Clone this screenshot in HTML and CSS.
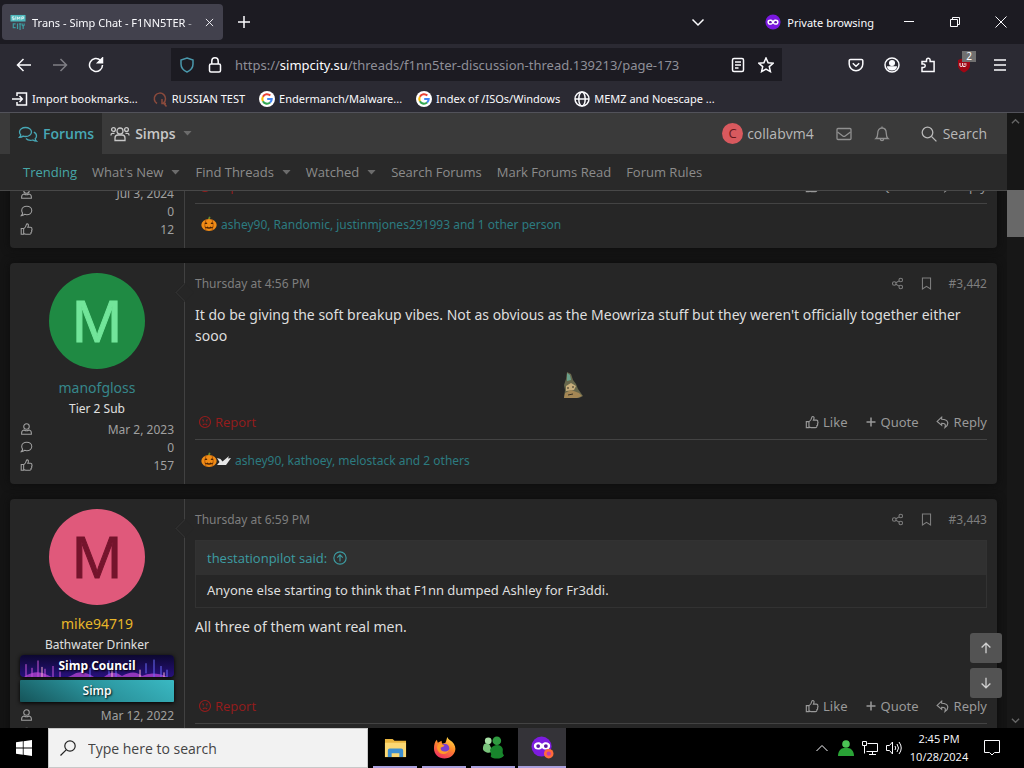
FILE: index.html
```html
<!DOCTYPE html>
<html lang="en">
<head>
    <meta charset="UTF-8">
    <meta name="viewport" content="width=device-width, initial-scale=1.0">
    <title>Trans - Simp Chat - F1NN5TER</title>
    <link rel="stylesheet" href="styles.css">
</head>
<body>
    <!-- Shared icons -->
    <svg class="sprite" aria-hidden="true">
        <symbol id="i-user" viewBox="0 0 16 16"><circle cx="8" cy="5" r="3.4"/><path d="M4.8 9.2C3 9.6 2 11 2 13v1.4h12V13c0-2-1-3.400-2.800-3.800-2 1.200-4.400 1.200-6.400 0z"/></symbol>
        <symbol id="i-comment" viewBox="0 0 16 16"><path d="M8.300 2.200c3.500 0 6.200 2.300 6.200 5.200s-2.700 5.200-6.200 5.200c-1 0-1.900-.2-2.700-.5-1 .8-2.300 1.500-4 1.600.9-1 1.500-2 1.600-3.100C2.500 9.700 2.100 8.600 2.100 7.400c0-2.900 2.700-5.200 6.200-5.200z"/></symbol>
        <symbol id="i-thumb" viewBox="0 0 16 16"><path d="M1.500 7.500h3v7h-3zM4.500 13.600l2.500.9h4.800c1.600 0 2-1.200 1.700-2.100.9-.5 1.100-1.500.7-2.300.7-.6.700-1.600.3-2.200.4-1-.3-2-1.500-2H9.600c.5-1 .9-2 .7-3.200-.2-1.200-2.200-1.500-2.500-.1-.4 2.400-1.500 4-3.300 5.100z"/></symbol>
        <symbol id="i-share" viewBox="0 0 16 16"><circle cx="4" cy="8" r="2.200"/><circle cx="12" cy="3.700" r="2.200"/><circle cx="12" cy="12.300" r="2.200"/><path d="M6 7l4-2.200M6 9l4 2.200"/></symbol>
        <symbol id="i-mark" viewBox="0 0 16 16"><path d="M3 1.200h10v13.600L8 11.600l-5 3.200z"/></symbol>
        <symbol id="i-plus" viewBox="0 0 16 16"><path d="M8 2v12M2 8h12"/></symbol>
        <symbol id="i-reply" viewBox="0 0 16 16"><path d="M6.500 2.500L1.300 7.300l5.200 4.500V9.400c3.600 0 5 1.300 3.700 5 4.800-3.200 4.800-9.300-3.700-9.500z"/></symbol>
        <symbol id="i-angry" viewBox="0 0 16 16"><circle cx="8" cy="8" r="6.300"/><path d="M4.800 5.300l2 1M11.200 5.300l-2 1M5.500 11.500c1.400-1.700 3.600-1.700 5 0M6 7.500v.8M10 7.500v.8"/></symbol>
        <symbol id="i-caret" viewBox="0 0 10 6"><path d="M0 0h10L5 5.500z"/></symbol>
        <symbol id="i-google" viewBox="0 0 16 16"><circle cx="8" cy="8" r="8" fill="#fff"/><g fill="none" stroke-width="2.100"><path d="M11.300 4.600A4.700 4.700 0 0 0 3.900 5.700" stroke="#ea4335"/><path d="M3.900 5.700a4.700 4.700 0 0 0 0 4.600" stroke="#fbbc05"/><path d="M3.900 10.300a4.700 4.700 0 0 0 7.200 1.200" stroke="#34a853"/><path d="M11.100 11.500A4.700 4.700 0 0 0 12.700 8H8.200" stroke="#4285f4"/></g></symbol>
        <symbol id="i-pumpkin" viewBox="0 0 16 16"><path d="M7 3l1-2.500 1.500.5L9 3z" fill="#6a8a2c"/><ellipse cx="8" cy="9" rx="7.700" ry="6" fill="#f08c16"/><path d="M5 3.500Q2.500 9 5 14.500M11 3.500q2.500 5.500 0 11" stroke="#b85a08" fill="none"/><path d="M3.500 8L5 6l1.500 2zM9.500 8L11 6l1.500 2zM3.500 10.500l2 .7.700-.7 1.800 1 1.800-1 .7.700 2-.7c-1 3-8 3-9 0z" fill="#4a2204"/></symbol>
        <symbol id="i-mask" viewBox="0 0 20 20"><circle cx="10" cy="10" r="9.500" fill="#7a18e0"/><path d="M10 8.300C8.800 6.600 3 5.800 3 10c0 4.400 5.300 4.300 7 1.900 1.700 2.400 7 2.500 7-1.900 0-4.200-5.800-3.400-7-1.700z" fill="#fff"/><ellipse cx="6.700" cy="10.200" rx="1.700" ry="1.500" fill="#5c10b0"/><ellipse cx="13.300" cy="10.200" rx="1.700" ry="1.500" fill="#5c10b0"/></symbol>
    </svg>

    <div class="titlebar">
        <div class="tab">
            <svg class="favicon" viewBox="0 0 16 17"><path d="M0 1h16v7H0z" fill="#4fb9bd"/><path d="M4 3H2v1.500h2V6H2M5.700 2.500V6M7.500 6V3l1.200 2L10 3v3M12 6V3h2v1.700h-2" fill="none" stroke="#e8f6f6" stroke-width=".9"/><path d="M5.500 10.500H3v4h2.500M7.500 10v6M9 10.500h2.500M10.200 10.500V17M12.500 10v2l1 1 1-1v-2M13.500 13v3" fill="none" stroke="#3d9ba0" stroke-width="1.300"/></svg>
            <span class="tab-title">Trans - Simp Chat - F1NN5TER -</span>
            <button class="tab-close" aria-label="Close tab"><svg class="line" viewBox="0 0 10 10"><path d="M1 1l8 8M9 1L1 9"/></svg></button>
        </div>
        <button class="new-tab" aria-label="New tab"><svg class="line" viewBox="0 0 14 14"><path d="M7 1v12M1 7h12"/></svg></button>
        <button class="list-tabs" aria-label="List all tabs"><svg class="line" viewBox="0 0 14 14"><path d="M1.500 4.500L7 10l5.500-5.500"/></svg></button>
        <div class="private"><svg viewBox="0 0 20 20"><use href="#i-mask"/></svg>Private browsing</div>
        <div class="win-buttons">
            <button aria-label="Minimize"><svg class="thin" viewBox="0 0 12 12"><path d="M1 5.500h10"/></svg></button>
            <button aria-label="Restore"><svg class="thin" viewBox="0 0 12 12"><path d="M1.500 3.500h7v7h-7zM3.500 3.500v-2h7v7h-2"/></svg></button>
            <button aria-label="Close"><svg class="thin" viewBox="0 0 12 12"><path d="M.5.5l11 11M11.500.5l-11 11"/></svg></button>
        </div>
    </div>

    <div class="toolbar">
        <div class="nav-buttons">
            <button aria-label="Back"><svg class="line" viewBox="0 0 16 16"><path d="M15 8H1.500M7.500 2l-6 6 6 6"/></svg></button>
            <button class="off" aria-label="Forward"><svg class="line" viewBox="0 0 16 16"><path d="M1 8h13.500M8.500 2l6 6-6 6"/></svg></button>
            <button aria-label="Reload"><svg class="line" viewBox="0 0 16 16"><path d="M14.500 8a6.500 6.500 0 1 1-2-4.700L14 5"/><path d="M14.500 1v4.800H9.700z" fill="currentColor"/></svg></button>
        </div>
        <div class="urlbar">
            <svg class="line shield" viewBox="0 0 16 16"><path d="M8 1l6 2v4c0 4-2.500 6.500-6 8-3.500-1.500-6-4-6-8V3z"/></svg>
            <svg class="line" viewBox="0 0 16 16"><rect x="2.500" y="7" width="11" height="8" rx="1.500"/><path d="M4.800 7V4a3.200 3.200 0 0 1 6.400 0v3"/></svg>
            <div class="url">https://<b>simpcity.su</b>/threads/f1nn5ter-discussion-thread.139213/page-173</div>
            <svg class="line" viewBox="0 0 16 16"><rect x="2.500" y="1.500" width="11" height="13" rx="1.500"/><path d="M5 5h6M5 8h6M5 11h3.500"/></svg>
            <svg class="line" viewBox="0 0 16 16"><path d="M8 1l2.100 4.700 5 .5-3.800 3.400 1.100 5L8 12l-4.400 2.600 1.100-5L.9 6.200l5-.5z"/></svg>
        </div>
        <div class="tool-buttons">
            <button aria-label="Save to Pocket"><svg class="line" viewBox="0 0 16 16"><path d="M2.500 2.500h11a1.300 1.300 0 0 1 1.300 1.300V7a6.800 6.800 0 0 1-13.600 0V3.800a1.300 1.300 0 0 1 1.300-1.300zM4.800 6.300L8 9.300l3.200-3"/></svg></button>
            <button aria-label="Account"><svg class="line" viewBox="0 0 16 16"><circle cx="8" cy="8" r="7"/><circle cx="8" cy="6" r="2.300" fill="currentColor"/><path d="M3.800 10h8.400c-1 3.700-7.400 3.700-8.400 0z" fill="currentColor"/></svg></button>
            <button aria-label="Extensions"><svg class="line" viewBox="0 0 16 16"><path d="M2 14.500v-4h1.500a1.700 1.700 0 0 0 0-3.500H2V4.500h4.500V3a1.800 1.800 0 0 1 3.600 0v1.500h4v10z"/></svg></button>
            <button class="ublock" aria-label="uBlock"><svg viewBox="0 0 16 16"><path d="M8 1l6 2v5c0 4-3 6-6 7.500C5 14 2 12 2 8V3z" fill="#a00614"/><path d="M4 6v2.500q0 1 1.300 1T6.700 8.500V6M6.700 8.500q0 1 1.300 1t2.300-1M8 7h2.500" fill="none" stroke="#fff"/></svg><span class="count">2</span></button>
            <button aria-label="Menu"><svg class="line" viewBox="0 0 16 16"><path d="M2 3h12M2 8h12M2 13h12"/></svg></button>
        </div>
    </div>

    <nav class="bookmarks">
        <a href="#"><svg class="line" viewBox="0 0 16 16"><path d="M5 5V2h9.500v12H5v-3M0 8h10M7.500 5L10.300 8 7.500 11"/></svg>Import bookmarks...</a>
        <a href="#"><svg class="line rus" viewBox="0 0 16 16"><path d="M5 12.500A5.600 5.600 0 1 1 11.500 12l3 3.500M10 8v4.500h4" fill="none"/></svg>RUSSIAN TEST</a>
        <a href="#"><svg viewBox="0 0 16 16"><use href="#i-google"/></svg>Endermanch/Malware...</a>
        <a href="#"><svg viewBox="0 0 16 16"><use href="#i-google"/></svg>Index of /ISOs/Windows</a>
        <a href="#"><svg class="line" viewBox="0 0 16 16"><circle cx="8" cy="8" r="7"/><ellipse cx="8" cy="8" rx="3.200" ry="7"/><path d="M1 8h14"/></svg>MEMZ and Noescape ...</a>
    </nav>

    <div class="viewport">
        <div class="page">
            <nav class="mainnav">
                <a class="nav-item selected" href="#"><svg class="icon" viewBox="0 0 20 16"><path d="M7.500 1.500c3.300 0 6 2 6 4.500s-2.700 4.500-6 4.500c-.9 0-1.700-.1-2.400-.4-1 .7-2.200 1.100-3.600 1.200.8-.8 1.200-1.600 1.300-2.400C1.900 8.100 1.500 7.100 1.500 6c0-2.500 2.700-4.500 6-4.500zM8 12.500c1 1.200 2.700 1.900 4.500 1.900.9 0 1.700-.1 2.400-.4 1 .7 2.200 1.100 3.600 1.200-.8-.8-1.200-1.600-1.300-2.400.9-.8 1.300-1.800 1.300-2.900 0-1.600-1-3-2.700-3.800"/></svg>Forums</a>
                <a class="nav-item" href="#"><svg class="icon" viewBox="0 0 20 16"><circle cx="10" cy="5" r="3"/><circle cx="3.500" cy="3.500" r="1.900"/><circle cx="16.500" cy="3.500" r="1.900"/><path d="M5 14.500V12c0-2 1.300-3 3-3h4c1.700 0 3 1 3 3v2.500zM1 9.500V9c0-1 .6-1.600 1.500-1.600h2M19 9.500V9c0-1-.6-1.600-1.500-1.600h-2"/></svg>Simps<svg class="caret" viewBox="0 0 10 6"><use href="#i-caret"/></svg></a>
                <a class="account" href="#"><span class="mini">C</span>collabvm4</a>
                <a class="bell" href="#" aria-label="Inbox"><svg class="icon" viewBox="0 0 16 16"><rect x="1" y="2.500" width="14" height="11" rx="1"/><path d="M1.500 6l5.300 4c.8.600 1.600.600 2.400 0l5.300-4"/></svg></a>
                <a class="bell" href="#" aria-label="Alerts"><svg class="icon" viewBox="0 0 16 16"><path d="M8 .5V2M2 12.500c1.500-1.200 1.700-2.500 1.700-5C3.700 4 5.500 2 8 2s4.300 2 4.300 5.500c0 2.500.2 3.800 1.700 5zM6.300 13c.2 2.200 3.200 2.200 3.400 0"/></svg></a>
                <a class="search" href="#"><svg class="icon" viewBox="0 0 16 16"><circle cx="6.500" cy="6.500" r="5.300"/><path d="M10.400 10.400l5 5"/></svg>Search</a>
            </nav>
            <nav class="subnav">
                <a class="selected" href="#">Trending</a>
                <a href="#">What's New<svg class="caret" viewBox="0 0 10 6"><use href="#i-caret"/></svg></a>
                <a href="#">Find Threads<svg class="caret" viewBox="0 0 10 6"><use href="#i-caret"/></svg></a>
                <a href="#">Watched<svg class="caret" viewBox="0 0 10 6"><use href="#i-caret"/></svg></a>
                <a href="#">Search Forums</a>
                <a href="#">Mark Forums Read</a>
                <a href="#">Forum Rules</a>
            </nav>

            <main class="thread">
                <article class="post first">
                    <aside class="user">
                        <ul class="stats">
                            <li><svg class="icon" viewBox="0 0 16 16"><use href="#i-user"/></svg>Jul 3, 2024</li>
                            <li><svg class="icon" viewBox="0 0 16 16"><use href="#i-comment"/></svg>0</li>
                            <li><svg class="icon" viewBox="0 0 16 16"><use href="#i-thumb"/></svg>12</li>
                        </ul>
                    </aside>
                    <div class="main">
                        <footer>
                            <div class="actions">
                                <a class="report" href="#"><svg class="icon" viewBox="0 0 16 16"><use href="#i-angry"/></svg>Report</a>
                                <a href="#"><svg class="icon" viewBox="0 0 16 16"><use href="#i-thumb"/></svg>Like</a>
                                <a href="#"><svg class="icon plus" viewBox="0 0 16 16"><use href="#i-plus"/></svg>Quote</a>
                                <a href="#"><svg class="icon" viewBox="0 0 16 16"><use href="#i-reply"/></svg>Reply</a>
                            </div>
                            <div class="reactions"><svg viewBox="0 0 16 16"><use href="#i-pumpkin"/></svg><a href="#">ashey90, Randomic, justinmjones291993 and 1 other person</a></div>
                        </footer>
                    </div>
                </article>

                <article class="post">
                    <aside class="user">
                        <a class="avatar green" href="#">M</a>
                        <a class="name" href="#">manofgloss</a>
                        <div class="rank">Tier 2 Sub</div>
                        <ul class="stats">
                            <li><svg class="icon" viewBox="0 0 16 16"><use href="#i-user"/></svg>Mar 2, 2023</li>
                            <li><svg class="icon" viewBox="0 0 16 16"><use href="#i-comment"/></svg>0</li>
                            <li><svg class="icon" viewBox="0 0 16 16"><use href="#i-thumb"/></svg>157</li>
                        </ul>
                    </aside>
                    <div class="main">
                        <header>
                            <time>Thursday at 4:56 PM</time>
                            <a href="#" aria-label="Share"><svg class="icon" viewBox="0 0 16 16"><use href="#i-share"/></svg></a>
                            <a href="#" aria-label="Bookmark"><svg class="icon" viewBox="0 0 16 16"><use href="#i-mark"/></svg></a>
                            <a href="#">#3,442</a>
                        </header>
                        <div class="message">It do be giving the soft breakup vibes. Not as obvious as the Meowriza stuff but they weren't officially together either sooo</div>
                        <footer>
                            <div class="actions">
                                <a class="report" href="#"><svg class="icon" viewBox="0 0 16 16"><use href="#i-angry"/></svg>Report</a>
                                <a href="#"><svg class="icon" viewBox="0 0 16 16"><use href="#i-thumb"/></svg>Like</a>
                                <a href="#"><svg class="icon plus" viewBox="0 0 16 16"><use href="#i-plus"/></svg>Quote</a>
                                <a href="#"><svg class="icon" viewBox="0 0 16 16"><use href="#i-reply"/></svg>Reply</a>
                            </div>
                            <div class="reactions"><svg viewBox="0 0 16 16"><use href="#i-pumpkin"/></svg><svg class="goose" viewBox="0 0 14 10"><path d="M0 10L2.500 7 0 3l3.500 1 2 2.500L12 1l-1 2.500L14 3l-3.500 5L9 10z" fill="#e6e6e6"/></svg><a href="#">ashey90, kathoey, melostack and 2 others</a></div>
                        </footer>
                    </div>
                </article>

                <article class="post">
                    <aside class="user">
                        <a class="avatar pink" href="#">M</a>
                        <a class="name gold" href="#">mike94719</a>
                        <div class="rank">Bathwater Drinker</div>
                        <div class="banners">
                            <em class="council"><svg viewBox="0 0 154 24" preserveAspectRatio="none"><path d="M6 24V10M12 24V14M18 24V6M25 24v-9M33 24V12M40 24v-6" stroke="#d05ae0"/><path d="M4 24q12-9 24-2t24 0q9-7 22 2zM84 24q9-9 18-1 12-8 20 0 10-6 26 1z" fill="#c048d8" opacity=".7"/><path d="M50 5l2 9M70 24V14M89 6v16M96 24V12M126 20V9M134 24V5M141 24V12M147 24v-8" stroke="#6b6dff"/><path d="M22 24V13M92 24V15M120 24v-8M144 24v-5" stroke="#ffb6d0"/></svg><span>Simp Council</span></em>
                            <em class="simp">Simp</em>
                        </div>
                        <ul class="stats">
                            <li><svg class="icon" viewBox="0 0 16 16"><use href="#i-user"/></svg>Mar 12, 2022</li>
                            <li><svg class="icon" viewBox="0 0 16 16"><use href="#i-comment"/></svg></li>
                        </ul>
                    </aside>
                    <div class="main">
                        <header>
                            <time>Thursday at 6:59 PM</time>
                            <a href="#" aria-label="Share"><svg class="icon" viewBox="0 0 16 16"><use href="#i-share"/></svg></a>
                            <a href="#" aria-label="Bookmark"><svg class="icon" viewBox="0 0 16 16"><use href="#i-mark"/></svg></a>
                            <a href="#">#3,443</a>
                        </header>
                        <div class="message">
                            <blockquote>
                                <a href="#">thestationpilot said: <svg class="icon" viewBox="0 0 16 16"><circle cx="8" cy="8" r="7"/><path d="M8 12V4.500M4.800 7.500L8 4.300l3.200 3.200"/></svg></a>
                                <p>Anyone else starting to think that F1nn dumped Ashley for Fr3ddi.</p>
                            </blockquote>
                            All three of them want real men.
                        </div>
                        <footer>
                            <div class="actions">
                                <a class="report" href="#"><svg class="icon" viewBox="0 0 16 16"><use href="#i-angry"/></svg>Report</a>
                                <a href="#"><svg class="icon" viewBox="0 0 16 16"><use href="#i-thumb"/></svg>Like</a>
                                <a href="#"><svg class="icon plus" viewBox="0 0 16 16"><use href="#i-plus"/></svg>Quote</a>
                                <a href="#"><svg class="icon" viewBox="0 0 16 16"><use href="#i-reply"/></svg>Reply</a>
                            </div>
                            <div class="reactions"></div>
                        </footer>
                    </div>
                </article>
            </main>

            <div class="scroll-buttons">
                <button aria-label="Top"><svg class="line" viewBox="0 0 16 16"><path d="M8 14V2.500M3 7.500l5-5 5 5"/></svg></button>
                <button aria-label="Bottom"><svg class="line" viewBox="0 0 16 16"><path d="M8 2v11.500M3 8.500l5 5 5-5"/></svg></button>
            </div>
            <svg class="pointer" viewBox="0 0 22 30"><path d="M5 1l4 2 2 6 3 4 2 5 5 7-4 2H2l1-8-1-5 2-6z" fill="#67674c"/><path d="M5 2l3 2 1 5-4 1z" fill="#6aa08a"/><path d="M4 15l5-3 5 3-2 4-8 1z" fill="#c6ad7b"/><path d="M3 22l6-3 8 3 3 3-5 2H2z" fill="#a38654"/><path d="M5 17h2M10 16h2M6 24l5-1" stroke="#352f24"/></svg>
        </div>
        <div class="scrollbar">
            <svg class="line" viewBox="0 0 10 10"><path d="M1 7l4-4 4 4"/></svg>
            <div class="thumb"></div>
            <svg class="line" viewBox="0 0 10 10"><path d="M1 3l4 4 4-4"/></svg>
        </div>
    </div>

    <div class="taskbar">
        <button class="start" aria-label="Start"><svg viewBox="0 0 16 16"><path d="M0 2.200l6.800-.9v6.200H0zM7.600 1.200L16 0v7.500H7.600zM0 8.400h6.800v6.300L0 13.800zM7.600 8.400H16V16l-8.400-1.200z" fill="#fff"/></svg></button>
        <label class="find"><svg viewBox="0 0 16 16"><circle cx="10" cy="6" r="5.200"/><path d="M6.200 9.800L.5 15.500"/></svg><input type="text" placeholder="Type here to search"></label>
        <div class="apps">
            <button aria-label="File Explorer"><svg viewBox="0 0 24 24"><path d="M1 3h8l2 2h12v17H1z" fill="#e9b53f"/><path d="M1 7h22v15H1z" fill="#fbd873"/><path d="M4 22v-7q0-2 2-2h12q2 0 2 2v7h-4v-4H8v4z" fill="#3d8fd0"/></svg></button>
            <button aria-label="Firefox"><svg viewBox="0 0 24 24"><defs><linearGradient id="fx" x1=".8" y1="0" x2=".3" y2="1"><stop offset="0" stop-color="#ffe14a"/><stop offset=".45" stop-color="#ff8a2a"/><stop offset="1" stop-color="#ee2d62"/></linearGradient></defs><path d="M15 1c1 3 3 3 5 5 3 3 4 7 3 10-2 5-6 7.500-11 7.500C6 23.500 1 19 1 13c0-4 1-7 3-9l1 3 4-2c0 1 0 2 1 3l3-1c1-2 1-4 2-6z" fill="url(#fx)"/><circle cx="12" cy="13" r="5" fill="#7a3fd0"/><path d="M5 9c3-2 5 0 7 1-1 2-4 1-4 3 0 3 5 5 9 1-1 5-9 7-12 1-1-2-1-4 0-6z" fill="#ff9b28"/></svg></button>
            <button aria-label="Messenger"><svg viewBox="0 0 24 24"><circle cx="6.500" cy="5" r="3.500" fill="#a8e0a6"/><path d="M1 13c0-6 4-6 7-4l3 7c-3 3-10 1-10-3z" fill="#79c47b"/><circle cx="15.500" cy="5" r="4.500" fill="#2f9b40"/><path d="M9 13c3-4 9-5 12-1 2 3-1 5 2 8-2 5-13 4-14 1 2-3-2-5 0-8z" fill="#18852c"/></svg></button>
            <button class="active" aria-label="Firefox Private Browsing"><svg viewBox="0 0 24 24"><circle cx="11" cy="11" r="10.500" fill="#7d1ce0"/><path d="M11.500 8.300C9.500 5.500 3 6 3 10.500S9.500 15 11.500 12.500C13.500 15 20 15 20 10.500s-6.500-5-8.500-2.200z" fill="#fff"/><circle cx="7.500" cy="10.500" r="2" fill="#5a169f"/><circle cx="15.500" cy="10.500" r="2" fill="#5a169f"/><circle cx="18.500" cy="18.500" r="5" fill="#ff6a3a"/><circle cx="18.500" cy="18.500" r="2.200" fill="#c33bb0"/></svg></button>
        </div>
        <div class="tray">
            <svg class="thin" viewBox="0 0 16 16"><path d="M2.500 11L8 5.500l5.500 5.500"/></svg>
            <svg viewBox="0 0 16 16"><circle cx="8" cy="4" r="3.800" fill="#4cc455"/><path d="M0 16c0-5 3-8 6-8h4c3 0 6 3 6 8z" fill="#2aa336"/></svg>
            <svg class="thin" viewBox="0 0 16 16"><path d="M5.500 3.500h10v8h-11M10.500 11.500v3M7 14.500h7M.5 1.500h4v4h-4zM2.500 5.500v8"/></svg>
            <svg class="thin" viewBox="0 0 16 16"><path d="M.5 5.500h3l3-3.500v12l-3-3.500h-3zM9 6q1.500 2 0 4M11 4q3 4 0 8M13 2q4.500 6 0 12"/></svg>
        </div>
        <div class="clock"><span>2:45 PM</span><span>10/28/2024</span></div>
        <button class="notify" aria-label="Notifications"><svg class="thin" viewBox="0 0 18 18"><path d="M1.500 1.500h15v12h-5L9 16l-2.500-2.500h-5z"/></svg></button>
    </div>
</body>
</html>
```
FILE: styles.css
```css
* {
    margin: 0;
    padding: 0;
    box-sizing: border-box;
}

body {
    height: 100vh;
    display: flex;
    flex-direction: column;
    overflow: hidden;
    background: #141414;
    color: #fbfbfe;
    font-family: "Noto Sans", "Open Sans", sans-serif;
    font-size: 11px;
}

a {
    color: inherit;
    text-decoration: none;
}

button {
    display: flex;
    align-items: center;
    justify-content: center;
    background: none;
    border: none;
    color: inherit;
    font: inherit;
}

svg {
    flex-shrink: 0;
    width: 16px;
    height: 16px;
}

.sprite {
    display: none;
}

.line,
.thin,
.icon {
    fill: none;
    stroke: currentColor;
    stroke-width: 1.5;
}

.thin {
    stroke-width: 1;
}

.icon {
    stroke-width: 1.3;
}

.caret {
    width: 9px;
    height: 5px;
    fill: #6c6c6c;
}

/* Browser chrome */
.titlebar {
    height: 44px;
    flex-shrink: 0;
    display: flex;
    align-items: center;
    background: #1c1b22;
}

.tab {
    width: 221px;
    height: 36px;
    margin-left: 2px;
    padding: 0 8px;
    display: flex;
    align-items: center;
    gap: 6px;
    background: #42414d;
    border-radius: 4px;
}

.tab-title {
    flex: 1;
    overflow: hidden;
    white-space: nowrap;
    mask-image: linear-gradient(to left, transparent, #000 12px);
}

.tab-close svg {
    width: 9px;
    height: 9px;
    stroke-width: 1;
}

.tab-close {
    width: 12px;
    height: 20px;
}

.new-tab {
    width: 42px;
    height: 36px;
}

.new-tab svg {
    width: 14px;
    height: 14px;
}

.list-tabs {
    margin-left: auto;
    margin-right: 60px;
}

.list-tabs svg {
    width: 14px;
}

.private {
    display: flex;
    align-items: center;
    gap: 6px;
    margin-right: 12px;
}

.win-buttons {
    display: flex;
}

.win-buttons button {
    width: 46px;
    height: 44px;
}

.win-buttons svg {
    width: 12px;
    height: 12px;
}

.toolbar {
    height: 41px;
    flex-shrink: 0;
    display: flex;
    align-items: center;
    background: #2b2a33;
}

.nav-buttons {
    display: flex;
    gap: 4px;
    padding-left: 8px;
}

.nav-buttons button,
.tool-buttons button {
    width: 32px;
    height: 32px;
}

.off {
    opacity: .4;
}

.urlbar {
    flex: 1;
    min-width: 0;
    height: 33px;
    margin-left: 59px;
    padding: 0 8px;
    display: flex;
    align-items: center;
    gap: 12px;
    background: #1c1b22;
}

.shield {
    color: #4a98ac;
}

.url {
    flex: 1;
    min-width: 0;
    overflow: hidden;
    white-space: nowrap;
    font-size: 13px;
    color: #8f8f98;
}

.url b {
    font-weight: 400;
    color: #fbfbfe;
}

.tool-buttons {
    display: flex;
    gap: 4px;
    padding: 0 8px 0 58px;
}

.ublock {
    position: relative;
}

.count {
    position: absolute;
    top: 2px;
    right: 4px;
    width: 14px;
    background: #707070;
    font-size: 10px;
    line-height: 11px;
    text-align: center;
}

.bookmarks {
    height: 28px;
    flex-shrink: 0;
    display: flex;
    gap: 14px;
    padding-left: 12px;
    background: #2b2a33;
    border-bottom: 1px solid #52525a;
}

.bookmarks a {
    display: flex;
    align-items: center;
    gap: 4px;
    white-space: nowrap;
}

.rus {
    color: #8a4a3c;
}

/* Forum page */
.viewport {
    flex: 1;
    min-height: 0;
    display: flex;
}

.page {
    position: relative;
    flex: 1;
    min-width: 0;
    display: flex;
    flex-direction: column;
    color: #a0a0a0;
    font-size: 13px;
}

.mainnav {
    height: 41px;
    flex-shrink: 0;
    display: flex;
    align-items: center;
    padding: 0 20px 0 10px;
    background: #3a3a3a;
    color: #b8b8b8;
    font-family: "Open Sans", sans-serif;
    font-size: 14px;
}

.nav-item {
    height: 41px;
    display: flex;
    align-items: center;
    gap: 5px;
    padding: 0 8px;
    color: #c8c8c8;
    font-weight: 600;
}

.nav-item .icon {
    width: 20px;
}

.nav-item .caret {
    margin-left: 2px;
}

.nav-item.selected {
    background: #292929;
    color: #47a7b5;
}

.account {
    display: flex;
    align-items: center;
    gap: 4px;
    margin-left: auto;
}

.mini {
    width: 21px;
    height: 21px;
    border-radius: 50%;
    background: #d8595e;
    color: #67181c;
    font-size: 13px;
    line-height: 21px;
    text-align: center;
}

.bell {
    display: flex;
    margin-left: 22px;
    color: #909090;
}

.search {
    display: flex;
    align-items: center;
    gap: 6px;
    margin-left: 31px;
}

.subnav {
    height: 37px;
    flex-shrink: 0;
    display: flex;
    align-items: center;
    gap: 15px;
    padding-left: 23px;
    background: #292929;
    border-bottom: 1px solid #484848;
    color: #8c8c8c;
    font-family: "Open Sans", sans-serif;
}

.subnav a {
    display: flex;
    align-items: center;
    gap: 8px;
}

.subnav .selected {
    color: #47a7a7;
}

.thread {
    flex: 1;
    min-height: 0;
    overflow: hidden;
    display: flex;
    flex-direction: column;
    gap: 15px;
    padding: 0 10px;
}

.post {
    flex-shrink: 0;
    display: flex;
    background: #262626;
    border-radius: 4px;
    box-shadow: 0 0 8px #0c0c0c;
}

/* scrolled partly under the sticky header */
.post.first {
    margin-top: -33px;
    padding-top: 8px;
}

.first .user {
    justify-content: flex-end;
}

.user {
    width: 175px;
    padding: 10px;
    display: flex;
    flex-direction: column;
    align-items: center;
    border-right: 1px solid #414141;
}

.avatar {
    width: 96px;
    height: 96px;
    border-radius: 50%;
    font-family: "Liberation Sans", sans-serif;
    font-size: 60px;
    line-height: 98px;
    text-align: center;
    -webkit-text-stroke: 1px;
}

.green {
    background: #1f8a43;
    color: #72e59a;
}

.pink {
    background: #e0597b;
    color: #74142c;
}

.name {
    margin-top: 8px;
    font-size: 14px;
    line-height: 22px;
    color: #36868b;
}

.name.gold {
    color: #e8b629;
}

.rank {
    font-size: 12px;
    line-height: 20px;
    color: #e0e0e0;
}

.banners {
    align-self: stretch;
    display: grid;
    gap: 3px;
    margin-bottom: 3px;
}

.banners em {
    height: 22px;
    border-radius: 4px;
    box-shadow: 0 1px 4px #000;
    color: #fff;
    font-family: "Open Sans", sans-serif;
    font-style: normal;
    font-size: 12px;
    line-height: 22px;
    text-align: center;
    text-shadow: 1px 1px 2px #000;
}

.council {
    display: grid;
    overflow: hidden;
    background: linear-gradient(#0c0830, #27107c);
    font-weight: 700;
}

.council svg,
.council span {
    grid-area: 1 / 1;
    width: 100%;
    height: 22px;
}

.banners .simp {
    border-radius: 1px;
    background: linear-gradient(30deg, #155459, #2a929b 50%, #3ab9c3);
    font-weight: 600;
}

.stats {
    align-self: stretch;
    padding-top: 1px;
    list-style: none;
    font-size: 12px;
}

.stats li {
    height: 18px;
    display: flex;
    align-items: center;
    justify-content: space-between;
}

.stats .icon {
    width: 13px;
    height: 14px;
}

.main {
    position: relative;
    flex: 1;
    display: flex;
    flex-direction: column;
    padding: 10px 10px 0;
}

/* speech-bubble notch pointing at the avatar */
.post:not(.first) .main::before {
    content: "";
    position: absolute;
    left: -7px;
    top: 23px;
    width: 12px;
    height: 12px;
    background: #262626;
    border-left: 1px solid #323232;
    border-bottom: 1px solid #323232;
    transform: rotate(45deg);
}

.main header {
    height: 20px;
    margin-bottom: 11px;
    display: flex;
    align-items: center;
    gap: 16px;
    color: #7e7e7e;
    font-size: 12px;
}

.main header time {
    margin-right: auto;
}

.main header a {
    display: flex;
}

.main header .icon {
    width: 13px;
    height: 13px;
}

.message {
    padding-bottom: 59px;
    color: #dedede;
    font-size: 14px;
    line-height: 21px;
}

blockquote {
    margin-bottom: 8px;
    border: 1px solid #323232;
    font-size: 13px;
}

blockquote a {
    display: flex;
    align-items: center;
    gap: 6px;
    height: 34px;
    padding: 0 11px;
    background: #303030;
    color: #3d9da3;
    font-family: "Open Sans", sans-serif;
}

blockquote .icon {
    width: 14px;
}

blockquote p {
    padding: 5px 11px 6px;
}

.main footer {
    margin-top: auto;
}

.actions {
    display: flex;
    align-items: center;
    gap: 17px;
    height: 28px;
    padding-bottom: 8px;
    border-bottom: 1px solid #434343;
    color: #999;
}

.actions a {
    display: flex;
    align-items: center;
    gap: 4px;
}

.actions .icon {
    width: 14px;
    height: 14px;
}

.actions .plus {
    width: 12px;
    height: 12px;
    stroke-width: 2;
}

.actions .report {
    margin-right: auto;
    padding-left: 3px;
    gap: 3px;
    color: #951c1c;
    font-family: "Open Sans", sans-serif;
}

.reactions {
    height: 44px;
    display: flex;
    align-items: center;
    padding: 0 6px 4px;
    font-size: 12px;
    color: #2c7b80;
}

.reactions a {
    margin-left: 4px;
}

.reactions .goose {
    width: 14px;
    height: 10px;
}

.scroll-buttons {
    position: absolute;
    right: 5px;
    bottom: 30px;
    display: grid;
    gap: 5px;
}

.scroll-buttons button {
    width: 32px;
    height: 30px;
    border-radius: 3px;
    background: #535353;
    color: #d0d0d0;
}

.scroll-buttons svg {
    width: 14px;
}

.pointer {
    position: absolute;
    left: 562px;
    top: 258px;
    width: 22px;
    height: 30px;
}

.scrollbar {
    width: 17px;
    display: flex;
    flex-direction: column;
    align-items: center;
    padding: 4px 0 3px;
    background: #171717;
    color: #666;
}

.scrollbar svg {
    width: 9px;
    height: 9px;
}

.scrollbar .thumb {
    width: 17px;
    height: 47px;
    margin-top: 64px;
    margin-bottom: auto;
    background: #686868;
}

/* Windows taskbar */
.taskbar {
    height: 40px;
    flex-shrink: 0;
    display: flex;
    background: #000;
    font-family: "Open Sans", sans-serif;
}

.start {
    width: 48px;
}

.find {
    width: 320px;
    display: flex;
    align-items: center;
    gap: 12px;
    padding-left: 11px;
    background: #f2f2f2;
    border: 1px solid #c8c8c8;
}

.find svg {
    fill: none;
    stroke: #222;
    stroke-width: 1.2;
}

.find input {
    flex: 1;
    min-width: 0;
    background: none;
    border: none;
    outline: none;
    font-family: inherit;
    font-size: 14px;
}

.find input::placeholder {
    color: #444;
}

.apps {
    display: flex;
    gap: 1px;
    padding-left: 3px;
}

.apps button {
    width: 48px;
    border-bottom: 2px solid #a9a0dd;
}

.apps button:not(.active) {
    border-image: linear-gradient(90deg, transparent 4px, #a9a0dd 4px 44px, transparent 44px) 2;
}

.apps .active {
    background-color: #343338;
}

.apps svg {
    width: 23px;
    height: 23px;
}

.tray {
    margin-left: auto;
    display: flex;
    align-items: center;
    gap: 8px;
}

.clock {
    width: 74px;
    display: flex;
    flex-direction: column;
    justify-content: center;
    align-items: center;
    font-size: 11px;
    line-height: 18px;
}

.notify {
    width: 32px;
    margin-right: 16px;
}

.notify svg {
    width: 18px;
    height: 18px;
}
```
